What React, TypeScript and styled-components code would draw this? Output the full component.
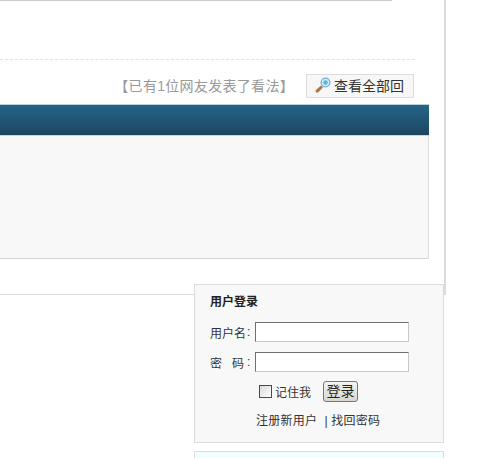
import React from "react";
import styled, { createGlobalStyle } from "styled-components";

const GlobalStyle = createGlobalStyle`
  html, body {
    margin: 0;
    padding: 0;
    background: #ffffff;
    overflow: hidden;
  }
  body {
    font-family: "Liberation Sans", "Noto Sans CJK SC", sans-serif;
    font-size: 12px;
    color: #333333;
  }
`;

const Page = styled.div`
  width: 489px;
  height: 458px;
  overflow: hidden;
`;

const Article = styled.div`
  box-sizing: border-box;
  width: 446px;
  height: 295px;
  border-right: 2px solid #dcdcdc;
  border-bottom: 1px solid #dcdcdc;
`;

const TopRule = styled.div`
  width: 392px;
  height: 1px;
  background: #cccccc;
`;

const DottedRule = styled.div`
  width: 415px;
  margin-top: 58px;
  border-top: 1px dashed #e2e2e2;
`;

const CommentBar = styled.div`
  display: flex;
  justify-content: flex-end;
  align-items: center;
  width: 414px;
  height: 24px;
  margin-top: 14px;
`;

const CommentCount = styled.span`
  font-size: 14px;
  line-height: 24px;
  color: #999999;
  margin-right: 12px;
  letter-spacing: 0.3px;
`;

const ViewAllButton = styled.div`
  box-sizing: border-box;
  display: flex;
  align-items: center;
  gap: 3px;
  width: 108px;
  height: 24px;
  padding: 0 0 2px 8px;
  background: #f7f7f7;
  border: 1px solid #dddddd;
  font-size: 14px;
  color: #333333;
  white-space: nowrap;
`;

const FormPanel = styled.div`
  width: 429px;
  margin-top: 6px;
`;

const FormHeader = styled.div`
  box-sizing: border-box;
  height: 32px;
  background: linear-gradient(#256489, #1c4660);
  border-top: 1px solid #b9d0dc;
  border-bottom: 1px solid #c4d8e3;
`;

const FormBody = styled.div`
  box-sizing: border-box;
  height: 123px;
  background: #f8f8f8;
  border-right: 1px solid #dddddd;
  border-bottom: 1px solid #d4d4d4;
`;

const LoginBox = styled.div`
  box-sizing: border-box;
  position: relative;
  width: 250px;
  height: 159px;
  margin: -11px 0 0 194px;
  padding: 10px 15px 0;
  background: #f8f8f8;
  border: 1px solid #dcdcdc;
`;

const LoginTitle = styled.div`
  font-weight: 700;
  line-height: 14px;
  margin-bottom: 13px;
  color: #222222;
`;

const FieldRow = styled.div`
  display: flex;
  align-items: center;
  height: 20px;

  & + & {
    margin-top: 10px;
  }
`;

const FieldLabel = styled.label`
  display: flex;
  justify-content: space-between;
  width: 34px;
  margin-right: 3px;
  color: #333333;
`;

const Colon = styled.span`
  width: 6px;
  margin-right: 2px;
`;

const TextInput = styled.input`
  box-sizing: border-box;
  width: 154px;
  height: 20px;
  padding: 0;
  background: #ffffff;
  border: 1px solid;
  border-color: #707070 #c8c8c8 #c8c8c8 #707070;
  outline: none;
`;

const RememberRow = styled.div`
  display: flex;
  align-items: center;
  height: 21px;
  margin: 9px 0 0 49px;
`;

const RememberBox = styled.span`
  box-sizing: border-box;
  width: 13px;
  height: 13px;
  margin-right: 3px;
  border: 1px solid #2c5468;
  background: linear-gradient(135deg, #d8dcd8, #ffffff);
`;

const RememberText = styled.span`
  margin-right: 12px;
  color: #333333;
`;

const SubmitButton = styled.button`
  box-sizing: border-box;
  width: 35px;
  height: 21px;
  padding: 0;
  font-family: inherit;
  font-size: 14px;
  line-height: 17px;
  color: #222222;
  background: linear-gradient(#f4f4f0, #d8d8d2);
  border: 1px solid #777777;
  border-radius: 3px;
`;

const LoginLinks = styled.div`
  margin: 11px 0 0 46px;
  line-height: 16px;
  letter-spacing: 0.25px;
  white-space: pre;
  color: #333333;
`;

const NoticeBox = styled.div`
  box-sizing: border-box;
  width: 250px;
  height: 40px;
  margin: 8px 0 0 194px;
  background: #f2ffff;
  border: 1px solid #dcdcdc;
`;

function SearchIcon() {
  return (
    <svg width="16" height="16" viewBox="0 0 16 16">
      <path d="M0.5 13.5 L6 8.5 L8 10.5 L3 15.5 L1 15.5 Z" fill="#b5704a" />
      <circle cx="10.5" cy="5.5" r="4.4" fill="#cdeaf7" stroke="#6fb2d6" strokeWidth="1.3" />
      <circle cx="10.5" cy="5.5" r="2.2" fill="#5cb4e0" />
    </svg>
  );
}

export default function App() {
  return (
    <Page>
      <GlobalStyle />
      <Article>
        <TopRule />
        <DottedRule />
        <CommentBar>
          <CommentCount>【已有1位网友发表了看法】</CommentCount>
          <ViewAllButton>
            <SearchIcon />
            查看全部回
          </ViewAllButton>
        </CommentBar>
        <FormPanel>
          <FormHeader />
          <FormBody />
        </FormPanel>
      </Article>
      <LoginBox>
        <LoginTitle>用户登录</LoginTitle>
        <FieldRow>
          <FieldLabel>
            <span>用</span>
            <span>户</span>
            <span>名</span>
          </FieldLabel>
          <Colon>:</Colon>
          <TextInput />
        </FieldRow>
        <FieldRow>
          <FieldLabel>
            <span>密</span>
            <span>码</span>
          </FieldLabel>
          <Colon>:</Colon>
          <TextInput />
        </FieldRow>
        <RememberRow>
          <RememberBox />
          <RememberText>记住我</RememberText>
          <SubmitButton>登录</SubmitButton>
        </RememberRow>
        <LoginLinks>注册新用户  | 找回密码</LoginLinks>
      </LoginBox>
      <NoticeBox />
    </Page>
  );
}
